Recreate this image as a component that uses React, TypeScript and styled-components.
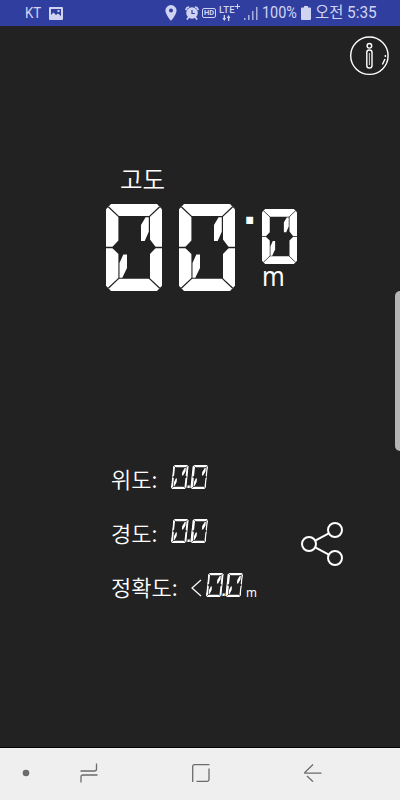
import React from "react";
import styled, { createGlobalStyle } from "styled-components";

const DARK = "#222222";

const Global = createGlobalStyle`
  * { box-sizing: border-box; }
  body { margin: 0; background: ${DARK}; }
  svg { display: block; flex: none; }
`;

const Screen = styled.div`
  width: 400px;
  height: 800px;
  display: flex;
  flex-direction: column;
  position: relative;
  overflow: hidden;
  background: ${DARK};
  color: #fff;
  font-family: "Noto Sans CJK KR", sans-serif;
`;

const StatusBar = styled.header`
  height: 26px;
  flex: none;
  display: flex;
  align-items: center;
  padding-left: 25px;
  background: #303f9f;
  color: #d0d4f2;
`;

const StatusText = styled.span<{ $width: number; $size?: number }>`
  width: ${(p) => p.$width}px;
  flex: none;
  font: 400 ${(p) => p.$size ?? 16}px/26px Roboto, "Noto Sans CJK KR", sans-serif;
  white-space: nowrap;
`;

const Narrow = styled.span<{ $scale: number }>`
  display: inline-block;
  transform: scaleX(${(p) => p.$scale});
  transform-origin: left;
`;

const StatusIcons = styled.div`
  display: flex;
  align-items: center;
  width: 199px;
  padding-left: 102px;
`;

const HdBadge = styled.span`
  width: 14px;
  height: 10px;
  margin-left: 3px;
  border: 1px solid currentColor;
  border-radius: 2px;
  font: 700 7.5px/8px Roboto, sans-serif;
  text-align: center;
`;

const Lte = styled.div`
  width: 25px;
  height: 18px;
  margin-left: 3px;
  display: flex;
  flex-direction: column;
  font: 500 9.5px/11px Roboto, sans-serif;
  white-space: nowrap;
`;

const LteLabel = styled.span`
  display: flex;
  align-items: flex-start;
  letter-spacing: 0.3px;
`;

const LteArrows = styled.svg`
  margin-left: 3px;
`;

const InfoRow = styled.div`
  display: flex;
  justify-content: flex-end;
  padding: 10px 11px 0 0;
  height: 138px;
`;

const Main = styled.main`
  flex: 1;
  display: flex;
  flex-direction: column;
`;

const AltitudeLabel = styled.div`
  margin-left: 120px;
  height: 40px;
  font-size: 24.5px;
  font-weight: 350;
  line-height: 30px;
`;

const Altitude = styled.div`
  display: flex;
  height: 88px;
  margin-left: 106px;
`;

const Point = styled.span`
  width: 16px;
  margin: -20px 0 0 8px;
  font: 700 48px/48px "Liberation Sans", sans-serif;
`;

const Fraction = styled.div`
  display: flex;
  flex-direction: column;
  margin: 5px 0 0 3px;
`;

const AltitudeUnit = styled.span`
  font: 400 27px/23px "Noto Sans", sans-serif;
  transform: scaleX(0.9);
  transform-origin: left;
`;

const Readings = styled.section`
  display: flex;
  margin: 161px 0 0 111px;
`;

const ReadingList = styled.div`
  width: 190px;
  display: flex;
  flex-direction: column;
`;

const ReadingRow = styled.div`
  height: 54px;
  display: flex;
  align-items: center;
`;

const ReadingLabel = styled.span<{ $width: number }>`
  width: ${(p) => p.$width}px;
  flex: none;
  margin-top: -4px;
  font-size: 22px;
  font-weight: 350;
  line-height: 30px;
  white-space: nowrap;
`;

const ReadingValue = styled.div`
  display: flex;
  height: 24px;
  margin-top: -6px;
  transform: skewX(-6deg);
`;

const ReadingPoint = styled.span`
  width: 4px;
  font: 700 16px/36px "Liberation Sans", sans-serif;
`;

const LessThan = styled.svg`
  margin-right: 5px;
`;

const ReadingUnit = styled.span`
  margin: 7px 0 0 4px;
  font: 400 13px/20px "Noto Sans", sans-serif;
  transform: scaleX(0.9);
  transform-origin: left;
`;

const ShareButton = styled.button`
  margin: 68px 0 0;
  padding: 0;
  width: 44px;
  height: 46px;
  border: 0;
  background: none;
`;

const EdgeHandle = styled.div`
  position: absolute;
  right: -6px;
  top: 291px;
  width: 11px;
  height: 160px;
  border-radius: 5px;
  background: #b7b5b6;
`;

const NavBar = styled.nav`
  height: 53px;
  flex: none;
  display: flex;
  align-items: center;
  padding: 0 0 2px 22px;
  background: #efefef;
  border-top: 1px solid #000;
  color: #6b6b6b;
`;

const NavItem = styled.div<{ $width: number }>`
  width: ${(p) => p.$width}px;
`;

const Cell = styled.span<{ $w: number; $h: number; $after?: number }>`
  position: relative;
  width: ${(p) => p.$w}px;
  height: ${(p) => p.$h}px;
  margin-right: ${(p) => p.$after ?? 0}px;
  flex: none;
  display: flex;
  justify-content: center;
  align-items: center;
  clip-path: polygon(9% 0, 91% 0, 100% 6%, 100% 94%, 91% 100%, 9% 100%, 0 94%, 0 6%);
`;

const Numeral = styled.span<{ $h: number }>`
  font: 700 ${(p) => p.$h * 0.8}px/1 "Liberation Sans", sans-serif;
  -webkit-text-stroke: ${(p) => p.$h * 0.75}px #fff;
`;

const Seams = styled.svg`
  position: absolute;
  inset: 0;
`;

type DigitProps = { value: number; w: number; h: number; after?: number; thin?: boolean };

function SegmentDigit({ value, w, h, after, thin }: DigitProps) {
  return (
    <Cell $w={w} $h={h} $after={after}>
      <Numeral $h={h}>{value}</Numeral>
      {thin ? (
        <Seams width={w} height={h} viewBox="0 0 15 24" preserveAspectRatio="none">
          <path fill={DARK} d="M1.9 2.2H13.1V10.5L14 12L13.1 13.5V21.8H1.9V13.5L1 12L1.9 10.5Z" />
          <path stroke={DARK} strokeWidth=".6" d="M0 0L3 3M15 0L12 3M0 24L3 21M15 24L12 21M0 12H2M13 12H15" />
          <path fill="#fff" d="M11.4 3H12.5V6.5L10.6 10.5H9.4V7ZM3.8 13.5H5V17L3.4 21H2.5V17Z" />
        </Seams>
      ) : (
        <Seams width={w} height={h} viewBox="0 0 56 88" preserveAspectRatio="none">
          <path fill={DARK} d="M12.4 12.2H44V36L49.5 43.3V44.7L44 50.5V75.5H12.4V50.5L6.5 44.7V43.3L12.4 37Z" />
          <path stroke={DARK} strokeWidth="1.3" d="M2 2.5L13 13M54 2.5L43 13M2 85.5L13 75M54 85.5L43 75M0 44H8M48 44H56" />
          <path fill="#fff" d="M39.6 13.4H42.8V28L38.7 37.3H35V21.3ZM17.3 51H21V64.7L16.3 74.6H13.5V59.7Z" />
        </Seams>
      )}
    </Cell>
  );
}

function SmallValue() {
  return (
    <ReadingValue>
      <SegmentDigit value={0} w={15.5} h={24} thin />
      <ReadingPoint>.</ReadingPoint>
      <SegmentDigit value={0} w={15.5} h={24} thin />
    </ReadingValue>
  );
}

export default function App() {
  return (
    <Screen>
      <Global />
      <StatusBar>
        <StatusText $width={24} $size={14}><Narrow $scale={0.95}>KT</Narrow></StatusText>
        <svg width="14" height="13" viewBox="0 0 14 13">
          <path fill="currentColor" fillRule="evenodd" d="M1 0H13Q14 0 14 1V12Q14 13 13 13H1Q0 13 0 12V1Q0 0 1 0ZM2 2V8L4.5 5.5L7 8L9 6.5L12 9V2ZM8.5 3H10.5V5H8.5Z" />
        </svg>
        <StatusIcons>
          <svg width="20" height="16" viewBox="0 0 20 16">
            <path fill="currentColor" fillRule="evenodd" d="M6 0A5.6 5.6 0 0 1 11.6 5.6C11.6 9.5 6 16 6 16S.4 9.5.4 5.6A5.6 5.6 0 0 1 6 0ZM6 3.6A2 2 0 1 0 6 7.6A2 2 0 1 0 6 3.6Z" />
          </svg>
          <svg width="14" height="14" viewBox="0 0 14 14" fill="none" stroke="currentColor">
            <circle cx="7" cy="7" r="5.8" fill="currentColor" stroke="none" />
            <path strokeWidth="1.7" strokeLinecap="round" d="M1 3.5Q1.5 1.5 3.5 1M13 3.5Q12.5 1.5 10.5 1M3.5 11.5L2.3 13M10.5 11.5L11.7 13" />
            <path stroke="#303f9f" strokeWidth="1.2" d="M7 4V7.5H9.8" />
          </svg>
          <HdBadge>HD</HdBadge>
          <Lte>
            <LteLabel>LTE<svg width="5" height="5" viewBox="0 0 5 5"><path d="M2.5 0V5M0 2.5H5" stroke="currentColor" /></svg></LteLabel>
            <LteArrows width="9" height="6" viewBox="0 0 9 6" fill="currentColor">
              <path d="M1.7 0H3V3H4.2L2.3 6L.4 3H1.7ZM6 6H7.3V3H8.5L6.6 0L4.7 3H6Z" />
            </LteArrows>
          </Lte>
          <svg width="14" height="13" viewBox="0 0 14 13" fill="currentColor">
            <path d="M0 11H1.5V13H0ZM4 8H5.5V13H4ZM8 4H9.5V13H8ZM12 0H13.5V13H12Z" opacity=".75" />
          </svg>
        </StatusIcons>
        <StatusText $width={39}><Narrow $scale={0.9}>100%</Narrow></StatusText>
        <svg width="14" height="14" viewBox="0 0 14 14">
          <path fill="currentColor" d="M3 0H7V1.5H9Q10 1.5 10 2.5V13Q10 14 9 14H1Q0 14 0 13V2.5Q0 1.5 1 1.5H3Z" />
        </svg>
        <StatusText $width={64}><Narrow $scale={0.96}>오전 5:35</Narrow></StatusText>
      </StatusBar>
      <Main>
        <InfoRow>
          <svg width="40" height="40" viewBox="0 0 40 40" fill="none" stroke="#fff" strokeWidth="1.4">
            <circle cx="20.4" cy="19.7" r="18.7" />
            <circle cx="20.4" cy="9.8" r="2.3" />
            <rect x="17.8" y="14" width="5.2" height="18" rx="2.6" />
            <path d="M20.4 17V29" strokeWidth=".8" />
            <path d="M36.4 19V21M36 23L33.4 28.5" />
          </svg>
        </InfoRow>
        <AltitudeLabel>고도</AltitudeLabel>
        <Altitude>
          <SegmentDigit value={0} w={56} h={87} after={17} />
          <SegmentDigit value={0} w={56} h={87} />
          <Point>.</Point>
          <Fraction>
            <SegmentDigit value={0} w={35} h={55} />
            <AltitudeUnit>m</AltitudeUnit>
          </Fraction>
        </Altitude>
        <Readings>
          <ReadingList>
            <ReadingRow>
              <ReadingLabel $width={61}>위도:</ReadingLabel>
              <SmallValue />
            </ReadingRow>
            <ReadingRow>
              <ReadingLabel $width={61}>경도:</ReadingLabel>
              <SmallValue />
            </ReadingRow>
            <ReadingRow>
              <ReadingLabel $width={80}>정확도:</ReadingLabel>
              <LessThan width="11" height="18" viewBox="0 0 11 18">
                <path d="M10 1L1 9L10 17" fill="none" stroke="#fff" strokeWidth="1.2" />
              </LessThan>
              <SmallValue />
              <ReadingUnit>m</ReadingUnit>
            </ReadingRow>
          </ReadingList>
          <ShareButton aria-label="공유">
            <svg width="44" height="46" viewBox="0 0 44 46" fill="none" stroke="#fff" strokeWidth="2">
              <circle cx="8" cy="23" r="7" />
              <circle cx="34" cy="9" r="7" />
              <circle cx="34" cy="37" r="7" />
              <path d="M14.2 19.7L27.8 12.3M14.2 26.3L27.8 33.7" />
            </svg>
          </ShareButton>
        </Readings>
      </Main>
      <EdgeHandle />
      <NavBar>
        <NavItem $width={58}>
          <svg width="8" height="8" viewBox="0 0 8 8"><circle cx="4" cy="4" r="3.3" fill="currentColor" /></svg>
        </NavItem>
        <NavItem $width={112}>
          <svg width="18" height="20" viewBox="0 0 18 20" fill="none" stroke="currentColor" strokeWidth="1.3">
            <path d="M.5 8H14.5Q16.5 8 16.5 6V.5M17.5 12H3Q1 12 1 14V19.5" />
          </svg>
        </NavItem>
        <NavItem $width={112}>
          <svg width="18" height="18" viewBox="0 0 18 18" fill="none" stroke="currentColor" strokeWidth="1.3">
            <path d="M.7 18V2.5Q.7.7 2.5.7H17.5M17 4.5V15.5Q17 17.3 15.2 17.3H4.5" />
          </svg>
        </NavItem>
        <NavItem $width={20}>
          <svg width="18" height="18" viewBox="0 0 18 18" fill="none" stroke="currentColor" strokeWidth="1.3">
            <path d="M9 .5L.8 8.5V9.2H17.5M3 12L9 17.7" />
          </svg>
        </NavItem>
      </NavBar>
    </Screen>
  );
}
